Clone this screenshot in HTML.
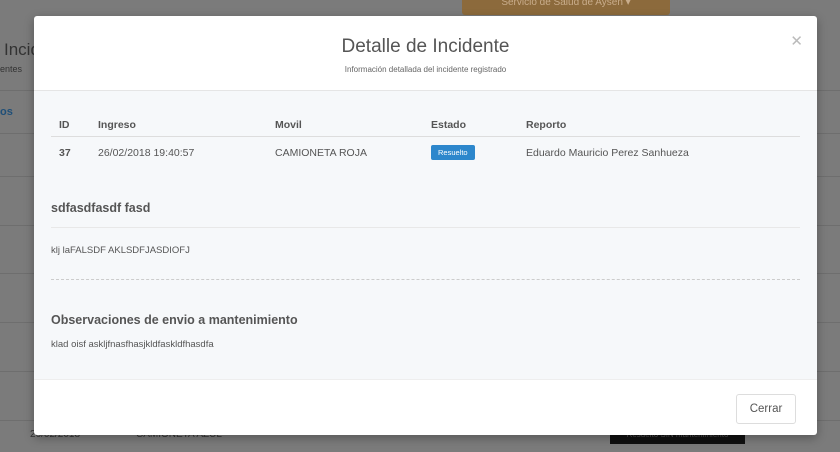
<!DOCTYPE html>
<html><head><meta charset="utf-8"><style>
*{margin:0;padding:0;box-sizing:border-box}
body{width:840px;height:452px;overflow:hidden;background:#7b7b7b;font-family:"Liberation Sans",sans-serif;position:relative;color:#555}
.bg{position:absolute;left:0;top:0;width:840px;height:452px}
.hl{position:absolute;left:0;right:0;height:1px;background:#6e6e6e}
.modal{position:absolute;left:34px;top:16px;width:783px;height:419px;background:#fff;border-radius:3px;box-shadow:0 3px 10px rgba(0,0,0,.3);overflow:hidden}
.hdr{height:75px;text-align:center;border-bottom:1px solid #e5e5e5;position:relative}
.hdr h2{font-weight:normal;font-size:19px;color:#555;padding-top:20px}
.hdr p{font-size:8px;color:#666;margin-top:7px}
.x{position:absolute;right:14px;top:16px;color:#bbb;font-size:15px}
.body{height:288px;background:#f6f8fa;padding:0 17px;position:relative}
table{border-collapse:collapse;font-size:10.5px;position:absolute;top:23px;left:17px;width:749px}
th{text-align:left;font-weight:bold;color:#555;height:22px;border-bottom:1px solid #ddd;padding-left:8px}
td{height:33px;padding-left:8px;color:#555}
.badge{display:inline-block;background:#2d87cc;color:#fff;font-size:7.5px;padding:3px 7px;border-radius:2px}
.foot{height:56px;position:relative;border-top:1px solid #eee}
.btn{position:absolute;right:21px;top:14px;width:60px;height:30px;border:1px solid #ddd;border-radius:3px;font-size:11.5px;color:#555;text-align:center;line-height:28px;background:#fff}
</style></head><body>
<div class="bg">
<div style="position:absolute;left:462px;top:0;width:208px;height:15px;background:#8c6a3c;border-radius:0 0 3px 3px;color:#c9ad8c;font-size:10px;text-align:center;line-height:6px">Servicio de Salud de Aysen ▾</div>
<div style="position:absolute;left:4px;top:40px;font-size:17px;color:#333">Incid</div>
<div style="position:absolute;left:0;top:64px;font-size:9px;color:#333">entes</div>
<div style="position:absolute;left:0;top:106px;font-size:11px;color:#1f4f78;font-weight:bold">os</div>
<div class="hl" style="top:90px"></div><div class="hl" style="top:133px"></div>
<div class="hl" style="top:176px"></div><div class="hl" style="top:225px"></div><div class="hl" style="top:273px"></div><div class="hl" style="top:322px"></div><div class="hl" style="top:371px"></div><div class="hl" style="top:420px"></div>
<div style="position:absolute;left:30px;top:429px;font-size:10px;color:#333">26/02/2018</div>
<div style="position:absolute;left:136px;top:429px;font-size:10px;color:#333">CAMIONETA AZUL</div>
<div style="position:absolute;left:610px;top:430px;width:135px;height:14px;background:#111;color:#555;font-size:8px;text-align:center">Resuelto SIN mantenimiento</div>
</div>
<div class="modal">
<div class="hdr"><h2>Detalle de Incidente</h2><p>Información detallada del incidente registrado</p><span class="x">✕</span></div>
<div class="body">
<table><tr><th style="width:39px">ID</th><th style="width:177px">Ingreso</th><th style="width:156px">Movil</th><th style="width:95px">Estado</th><th>Reporto</th></tr>
<tr><td style="font-weight:bold">37</td><td>26/02/2018 19:40:57</td><td>CAMIONETA ROJA</td><td><span class="badge">Resuelto</span></td><td>Eduardo Mauricio Perez Sanhueza</td></tr></table>
<div style="position:absolute;left:17px;top:110px;font-size:12.5px;font-weight:bold;color:#555">sdfasdfasdf fasd</div>
<div style="position:absolute;left:17px;right:17px;top:136px;height:1px;background:#e8e8e8"></div>
<div style="position:absolute;left:17px;top:154px;font-size:9.5px;color:#555">klj laFALSDF AKLSDFJASDIOFJ</div>
<div style="position:absolute;left:17px;right:17px;top:188px;border-top:1px dashed #ccc"></div>
<div style="position:absolute;left:17px;top:222px;font-size:12.5px;font-weight:bold;color:#555">Observaciones de envio a mantenimiento</div>
<div style="position:absolute;left:17px;top:248px;font-size:9.5px;color:#555">klad oisf askljfnasfhasjkldfaskldfhasdfa</div>
</div>
<div class="foot"><div class="btn">Cerrar</div></div>
</div>
</body></html>
